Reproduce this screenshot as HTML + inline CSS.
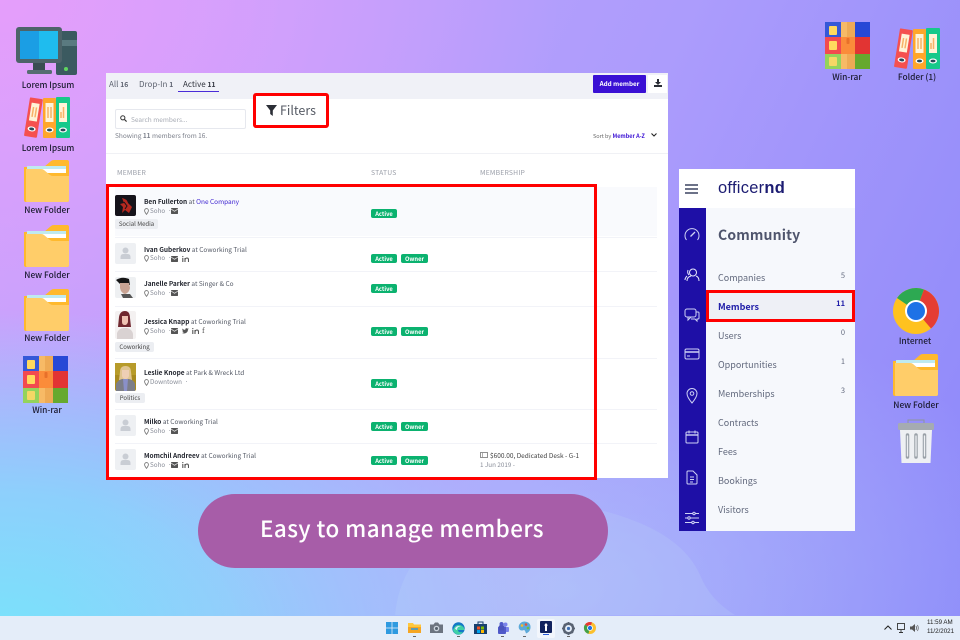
<!DOCTYPE html>
<html><head><meta charset="utf-8"><style>
html,body{margin:0;padding:0}
#s{position:relative;width:960px;height:640px;overflow:hidden;font-family:"Noto Sans CJK JP","Liberation Sans",sans-serif;
background:
radial-gradient(500px 300px at 560px 590px,rgba(176,205,252,.6),rgba(176,205,252,0) 100%),
radial-gradient(520px 330px at 0px 640px,#79e3fb 0%,rgba(121,227,251,.7) 45%,rgba(121,227,251,0) 100%),
radial-gradient(560px 420px at 0px 0px,#e59efb 0%,rgba(229,158,251,0) 100%),
linear-gradient(115deg,#c8a4fd 0%,#ac9cfc 55%,#8c88f9 100%)}
.a{position:absolute}
.t{position:absolute;white-space:nowrap;line-height:12px;height:12px}
.l{position:absolute;white-space:nowrap;font-size:8.4px;font-weight:500;line-height:12px;height:12px;color:#1b1b30;transform:translateX(-50%)}
svg{position:absolute;overflow:visible}
.n{font-size:6.5px;color:#555a66}.n b{color:#23262f;font-weight:700}
.m{font-size:6.3px;color:#8a8e99}
.tag{position:absolute;height:10px;line-height:10px;background:#eceef2;border-radius:2px;font-size:6px;color:#444;text-align:center}
.bd{position:absolute;height:9px;line-height:9px;background:#0bb26f;border-radius:2px;font-size:5.8px;font-weight:700;color:#fff;text-align:center}
.av{position:absolute;width:21px;height:21px;background:#eef0f3;border-radius:2px;left:115px}
.sep{position:absolute;left:115px;width:542px;height:1px;background:#f2f3f8}
.it{position:absolute;left:718px;font-size:9px;line-height:12px;color:#636a7e;white-space:nowrap}
.ct{position:absolute;left:832px;width:13px;text-align:right;font-size:7.5px;line-height:12px;color:#636a7e}
</style></head><body><div id="s">
<svg width="0" height="0" style="position:absolute">
<defs>
<symbol id="fo" viewBox="0 0 45 42"><path d="M0 7h20L27 1q1-1 3-1h13q2 0 2 2v38q0 2-2 2H2q-2 0-2-2z" fill="#ffb92d"/><rect x="3" y="6" width="39" height="7" fill="#fff"/><rect x="3" y="6" width="39" height="3" fill="#bfeaf0"/><path d="M2 9h15q2 0 3 1l6 5q1 1 3 1h16v24q0 2-2 2H3q-1 0-1-2z" fill="#ffcd69"/></symbol>
<symbol id="bi" viewBox="0 0 46 41"><g transform="rotate(9 9 20)"><rect x="3" y="1" width="13" height="39" rx="1" fill="#f5504f"/><rect x="5.500" y="6" width="8" height="18" fill="#fff3d8"/><path d="M8 10v10M11 10v10" stroke="#f7b267" stroke-width="1.500"/><ellipse cx="9.500" cy="32" rx="4" ry="2.500" fill="#fff"/><ellipse cx="9.500" cy="32" rx="2.500" ry="1.400" fill="#294a5a"/></g><rect x="19" y="1" width="13" height="40" rx="1" fill="#ffa62b"/><rect x="21.500" y="6" width="8" height="19" fill="#fff3d8"/><path d="M24 10v11M27 10v11" stroke="#f7b267" stroke-width="1.500"/><ellipse cx="25.500" cy="33" rx="4" ry="2.500" fill="#fff"/><ellipse cx="25.500" cy="33" rx="2.500" ry="1.400" fill="#294a5a"/><rect x="32" y="0" width="14" height="41" rx="1" fill="#16c98a"/><rect x="35" y="6" width="8" height="19" fill="#fff3d8"/><path d="M37 21v-6M39.500 21V10" stroke="#f7b267" stroke-width="1.500"/><ellipse cx="39" cy="33" rx="4" ry="2.500" fill="#fff"/><ellipse cx="39" cy="33" rx="2.500" ry="1.400" fill="#294a5a"/></symbol>
<symbol id="wr" viewBox="0 0 45 47"><rect width="17" height="15" fill="#3458d8"/><rect x="29" width="16" height="15" fill="#2748d6"/><rect y="15" width="17" height="17" fill="#f24a4f"/><rect x="29" y="15" width="16" height="17" fill="#e23433"/><rect y="32" width="17" height="15" fill="#94d35c"/><rect x="29" y="32" width="16" height="15" fill="#66a92e"/><rect x="16" width="14" height="47" fill="#f7ba66"/><rect x="22" width="8" height="47" fill="#eeaa55"/><rect x="16" y="15" width="14" height="17" fill="#fb8c3a"/><rect x="21.500" y="16" width="3" height="6" rx="1" fill="#e8702a"/><rect x="4" y="4" width="8" height="9" rx="1" fill="#ffd95e"/><rect x="4" y="19" width="8" height="9" rx="1" fill="#ffd95e"/><rect x="4" y="35" width="8" height="9" rx="1" fill="#f5d765"/></symbol>
<symbol id="pe" viewBox="0 0 21 21"><circle cx="10.500" cy="7.500" r="3" fill="#c9cdd4"/><path d="M5.500 16v-2q0-3 3-3h4q3 0 3 3v2z" fill="#c9cdd4"/></symbol>
<symbol id="pi" viewBox="0 0 6 8"><path d="M3 .5A2.300 2.300 0 0 0 .7 2.800C.7 4.500 3 7.500 3 7.500S5.300 4.500 5.300 2.800A2.300 2.300 0 0 0 3 .5z" fill="none" stroke="#777" stroke-width="1"/></symbol>
<symbol id="ml" viewBox="0 0 7 6"><rect width="7" height="6" rx=".6" fill="#555"/><path d="M0 1l3.500 2.300L7 1" stroke="#eee" stroke-width=".7" fill="none"/></symbol>
<symbol id="ln" viewBox="0 0 7 6"><path d="M.8 2v4M3 6V2M3 3.500q.6-1.500 2-1.500 1.500 0 1.500 1.800V6" stroke="#555" stroke-width="1.100" fill="none"/><circle cx=".8" cy=".6" r=".6" fill="#555"/></symbol>
</defs></svg>

<!-- background wave -->
<svg style="left:0;top:0" width="960" height="640"><path d="M395 615Q400 560 450 530 520 490 600 510 680 530 700 575 710 600 735 615z" fill="#c2dbfc" opacity=".18"/></svg>

<!-- desktop left -->
<svg style="left:16px;top:27px" width="62" height="48" viewBox="0 0 62 48"><rect x="40" y="4" width="21" height="44" rx="2" fill="#3b5a60"/><rect x="40" y="13" width="21" height="6" fill="#5a7a80"/><circle cx="50" cy="42" r="2" fill="#5fd65f"/><rect x="0" y="0" width="46" height="36" rx="3" fill="#4d6369"/><rect x="4" y="4" width="38" height="28" fill="#1fbcee"/><rect x="4" y="4" width="19" height="28" fill="#1b9ee4"/><rect x="17" y="36" width="12" height="7" fill="#394d52"/><rect x="11" y="43" width="25" height="4" rx="1.500" fill="#566d72"/></svg>
<div class="l" style="left:48px;top:79px">Lorem Ipsum</div>
<svg style="left:24px;top:97px" width="46" height="41"><use href="#bi"/></svg>
<div class="l" style="left:48px;top:142px">Lorem Ipsum</div>
<svg style="left:24px;top:160px" width="45" height="42"><use href="#fo"/></svg>
<div class="l" style="left:47px;top:204px">New Folder</div>
<svg style="left:24px;top:225px" width="45" height="42"><use href="#fo"/></svg>
<div class="l" style="left:47px;top:269px">New Folder</div>
<svg style="left:24px;top:289px" width="45" height="42"><use href="#fo"/></svg>
<div class="l" style="left:47px;top:332px">New Folder</div>
<svg style="left:23px;top:356px" width="45" height="47"><use href="#wr"/></svg>
<div class="l" style="left:47px;top:404px">Win-rar</div>

<!-- desktop right -->
<svg style="left:825px;top:22px" width="45" height="47"><use href="#wr"/></svg>
<div class="l" style="left:847px;top:71px">Win-rar</div>
<svg style="left:894px;top:28px" width="46" height="41"><use href="#bi"/></svg>
<div class="l" style="left:917px;top:71px">Folder (1)</div>
<svg style="left:893px;top:288px" width="46" height="46" viewBox="0 0 46 46"><circle cx="23" cy="23" r="23" fill="#ffc21f"/><path d="M23 23L4 10A23 23 0 0 1 31 1.500z" fill="#2da952"/><path d="M23 23L31 1.500A23 23 0 0 1 38 40.500z" fill="#e53d33"/><circle cx="23" cy="23" r="11" fill="#fff"/><circle cx="23" cy="23" r="9" fill="#1e72e6"/></svg>
<div class="l" style="left:915px;top:335px">Internet</div>
<svg style="left:893px;top:354px" width="45" height="42"><use href="#fo"/></svg>
<div class="l" style="left:916px;top:399px">New Folder</div>
<svg style="left:898px;top:419px" width="36" height="45" viewBox="0 0 36 45"><path d="M10 5V1h16v4" fill="none" stroke="#8d959c" stroke-width="1"/><rect y="4" width="36" height="7" rx="1.500" fill="#a5abb1"/><path d="M2 11h32l-1.500 33H3.500z" fill="#eef0f3"/><path d="M9.500 16v22M18 16v22M26.500 16v22" stroke="#9aa1a8" stroke-width="3.500" stroke-linecap="round"/><path d="M9.500 17v20M18 17v20M26.500 17v20" stroke="#eef0f3" stroke-width="1.300" stroke-linecap="round"/></svg>

<!-- main panel -->
<div class="a" style="left:106px;top:73px;width:562px;height:405px;background:#fff"></div>
<div class="a" style="left:106px;top:73px;width:562px;height:26px;background:#f0f1f7"></div>
<div class="t" style="left:109px;top:78px;font-size:8px;color:#5e6370">All <b style="font-size:6.800px">16</b></div>
<div class="t" style="left:139px;top:78px;font-size:8px;color:#5e6370">Drop-In <b style="font-size:6.800px">1</b></div>
<div class="t" style="left:183px;top:78px;font-size:8px;color:#30333d">Active <b style="font-size:6.800px">11</b></div>
<div class="a" style="left:178px;top:91px;width:41px;height:1px;background:#4a2bd8"></div>
<div class="a" style="left:593px;top:75px;width:53px;height:18px;background:#3a10d4;border-radius:1px"></div>
<div class="t" style="left:593px;top:78px;width:53px;text-align:center;font-size:6.300px;font-weight:700;color:#fff">Add member</div>
<div class="a" style="left:648px;top:75px;width:19px;height:18px;background:#fff"></div>
<svg style="left:654px;top:79px" width="8" height="8" viewBox="0 0 8 8"><path d="M3 0h2v3h2L4 6 1 3h2zM0 6h8v2H0z" fill="#2a2d35"/></svg>

<div class="a" style="left:115px;top:109px;width:129px;height:18px;border:1px solid #e6e8ee;border-radius:2px;background:#fff"></div>
<svg style="left:120px;top:115px" width="7" height="7" viewBox="0 0 7 7"><circle cx="2.800" cy="2.800" r="2.100" fill="none" stroke="#333" stroke-width="1"/><path d="M4.500 4.500L6.600 6.600" stroke="#333" stroke-width="1.200"/></svg>
<div class="t" style="left:131px;top:113px;font-size:6.500px;color:#a8acb5">Search members...</div>
<div class="t" style="left:115px;top:129px;font-size:6.500px;color:#7b7f8a">Showing <b>11</b> members from 16.</div>
<div class="t" style="left:593px;top:130px;font-size:5.500px;color:#666">Sort by <b style="color:#3a10d4">Member A-Z</b></div>
<svg style="left:651px;top:133px" width="6" height="4" viewBox="0 0 6 4"><path d="M.5.500L3 3 5.500.500" fill="none" stroke="#222" stroke-width="1.100"/></svg>
<div class="a" style="left:106px;top:153px;width:562px;height:1px;background:#f0f1f5"></div>
<div class="t" style="left:117px;top:166px;font-size:6.800px;color:#9a9ea8;letter-spacing:.2px">MEMBER</div>
<div class="t" style="left:371px;top:166px;font-size:6.800px;color:#9a9ea8;letter-spacing:.2px">STATUS</div>
<div class="t" style="left:480px;top:166px;font-size:6.800px;color:#9a9ea8;letter-spacing:.2px">MEMBERSHIP</div>

<!-- filters -->
<div class="a" style="left:253px;top:93px;width:70px;height:29px;border:3px solid #f00;border-radius:3px;background:#fff"></div>
<svg style="left:266px;top:105px" width="11" height="11" viewBox="0 0 11 11"><path d="M0 0h11L6.800 5.500V11L4.200 9V5.500z" fill="#2b2e36"/></svg>
<div class="t" style="left:280px;top:102px;height:16px;line-height:16px;font-size:12.500px;color:#555a64">Filters</div>

<!-- rows -->
<div class="a" style="left:115px;top:187px;width:542px;height:49px;background:#f9fafd"></div>
<div class="sep" style="top:237px"></div><div class="sep" style="top:271px"></div><div class="sep" style="top:306px"></div><div class="sep" style="top:358px"></div><div class="sep" style="top:409px"></div><div class="sep" style="top:443px"></div>

<!-- row1 -->
<svg style="left:115px;top:195px" width="21" height="21" viewBox="0 0 21 21"><rect width="21" height="21" rx="2" fill="#15131a"/><path d="M7 3q5 1 6 5l4 4-3 6-4-3-3 3 1-6-3-3 4-1z" fill="#b5281f"/><path d="M9 7l3 4-2 3" stroke="#15131a" fill="none"/></svg>
<div class="t n" style="left:144px;top:195px"><b>Ben Fullerton</b> at <span style="color:#3a1fd0">One Company</span></div>
<svg style="left:144px;top:208px" width="5" height="7"><use href="#pi"/></svg>
<div class="t m" style="left:150px;top:205px">Soho &nbsp;·</div>
<svg style="left:171px;top:208px" width="7" height="6"><use href="#ml"/></svg>
<div class="tag" style="left:115px;top:219px;width:43px">Social Media</div>
<div class="bd" style="left:371px;top:209px;width:26px">Active</div>
<!-- row2 -->
<div class="av" style="top:243px"><svg width="21" height="21"><use href="#pe"/></svg></div>
<div class="t n" style="left:144px;top:243px"><b>Ivan Guberkov</b> at Coworking Trial</div>
<svg style="left:144px;top:255px" width="5" height="7"><use href="#pi"/></svg>
<div class="t m" style="left:150px;top:252px">Soho &nbsp;·</div>
<svg style="left:171px;top:256px" width="7" height="6"><use href="#ml"/></svg>
<svg style="left:182px;top:256px" width="7" height="6"><use href="#ln"/></svg>
<div class="bd" style="left:371px;top:254px;width:26px">Active</div>
<div class="bd" style="left:401px;top:254px;width:27px">Owner</div>
<!-- row3 -->
<svg style="left:115px;top:277px" width="21" height="21" viewBox="0 0 21 21"><rect width="21" height="21" rx="2" fill="#eef0f2"/><path d="M1 3q6-4 13-1l1 6q-3 0-5-1H5z" fill="#161616"/><path d="M5 6h9l1 5q-1 5-5 6-4-1-5-6z" fill="#c9a494"/><path d="M6 17h9l3 4H8z" fill="#555"/></svg>
<div class="t n" style="left:144px;top:277px"><b>Janelle Parker</b> at Singer &amp; Co</div>
<svg style="left:144px;top:290px" width="5" height="7"><use href="#pi"/></svg>
<div class="t m" style="left:150px;top:287px">Soho &nbsp;·</div>
<svg style="left:171px;top:290px" width="7" height="6"><use href="#ml"/></svg>
<div class="bd" style="left:371px;top:284px;width:26px">Active</div>
<!-- row4 -->
<svg style="left:115px;top:311px" width="21" height="28" viewBox="0 0 21 28"><rect width="21" height="28" rx="2" fill="#f4f1f1"/><path d="M4 6q1-6 6-6 5 0 5 7l1 9H3z" fill="#70282f"/><path d="M7 5h6v6q-1 3-3 3-3 0-3-3z" fill="#eec2b2"/><path d="M2 28v-6q2-5 7-5h3q5 1 6 6v5z" fill="#d9d2d2"/></svg>
<div class="t n" style="left:144px;top:315px"><b>Jessica Knapp</b> at Coworking Trial</div>
<svg style="left:144px;top:328px" width="5" height="7"><use href="#pi"/></svg>
<div class="t m" style="left:150px;top:325px">Soho &nbsp;·</div>
<svg style="left:171px;top:328px" width="7" height="6"><use href="#ml"/></svg>
<svg style="left:182px;top:328px" width="7" height="6" viewBox="0 0 7 6"><path d="M0 5q2 1 4 0 2-1 2-3.500L7 .5 6 .7Q5 0 4 .3 3 1 3.200 2 1.500 2 .4.500 0 2 1 3L.3 2.800Q.5 4 1.800 4.300 1 5 0 5z" fill="#555"/></svg>
<svg style="left:192px;top:328px" width="7" height="6"><use href="#ln"/></svg>
<div class="t" style="left:202px;top:325px;font-size:8px;color:#555;font-family:'Liberation Serif',serif">f</div>
<div class="tag" style="left:115px;top:342px;width:39px">Coworking</div>
<div class="bd" style="left:371px;top:327px;width:26px">Active</div>
<div class="bd" style="left:401px;top:327px;width:27px">Owner</div>
<!-- row5 -->
<svg style="left:115px;top:363px" width="21" height="28" viewBox="0 0 21 28"><rect width="21" height="28" rx="2" fill="#a88a1f"/><path d="M0 0h21v12H0z" fill="#b79b2a"/><path d="M5 9q0-6 5.500-6T16 9l1 8H4z" fill="#e0c590"/><path d="M7 7h7v6q-1 3-3.500 3T7 13z" fill="#eecfb5"/><path d="M1 28v-7q2-4 6-5h7q5 1 6 5v7z" fill="#7c7e88"/><path d="M8 16h5l-1 12H9z" fill="#8a90c8"/></svg>
<div class="t n" style="left:144px;top:366px"><b>Leslie Knope</b> at Park &amp; Wreck Ltd</div>
<svg style="left:144px;top:379px" width="5" height="7"><use href="#pi"/></svg>
<div class="t m" style="left:150px;top:376px">Downtown &nbsp;·</div>
<div class="tag" style="left:115px;top:393px;width:30px">Politics</div>
<div class="bd" style="left:371px;top:379px;width:26px">Active</div>
<!-- row6 -->
<div class="av" style="top:415px"><svg width="21" height="21"><use href="#pe"/></svg></div>
<div class="t n" style="left:144px;top:415px"><b>Milko</b> at Coworking Trial</div>
<svg style="left:144px;top:428px" width="5" height="7"><use href="#pi"/></svg>
<div class="t m" style="left:150px;top:425px">Soho &nbsp;·</div>
<svg style="left:171px;top:428px" width="7" height="6"><use href="#ml"/></svg>
<div class="bd" style="left:371px;top:422px;width:26px">Active</div>
<div class="bd" style="left:401px;top:422px;width:27px">Owner</div>
<!-- row7 -->
<div class="av" style="top:449px"><svg width="21" height="21"><use href="#pe"/></svg></div>
<div class="t n" style="left:144px;top:449px"><b>Momchil Andreev</b> at Coworking Trial</div>
<svg style="left:144px;top:462px" width="5" height="7"><use href="#pi"/></svg>
<div class="t m" style="left:150px;top:459px">Soho &nbsp;·</div>
<svg style="left:171px;top:462px" width="7" height="6"><use href="#ml"/></svg>
<svg style="left:182px;top:462px" width="7" height="6"><use href="#ln"/></svg>
<div class="bd" style="left:371px;top:456px;width:26px">Active</div>
<div class="bd" style="left:401px;top:456px;width:27px">Owner</div>
<svg style="left:480px;top:452px" width="8" height="6" viewBox="0 0 8 6"><rect x=".5" y=".5" width="7" height="5" fill="none" stroke="#777" stroke-width=".8"/><path d="M2.500 1v4" stroke="#777" stroke-width=".6"/></svg>
<div class="t n" style="left:490px;top:449px;color:#444">$600.00, Dedicated Desk - G-1</div>
<div class="t m" style="left:480px;top:459px">1 Jun 2019 -</div>

<!-- red box -->
<div class="a" style="left:106px;top:184px;width:485px;height:290px;border:3px solid #f00"></div>

<!-- pill -->
<div class="a" style="left:198px;top:494px;width:410px;height:74px;border-radius:37px;background:#a75da8"></div>
<div class="t" style="left:198px;top:510px;width:410px;height:36px;line-height:36px;text-align:center;padding-right:2px;box-sizing:border-box;font-size:22.400px;letter-spacing:.45px;font-weight:500;color:#fff">Easy to manage members</div>

<!-- sidebar -->
<div class="a" style="left:679px;top:169px;width:176px;height:362px;background:#f6f8fc"></div>
<div class="a" style="left:679px;top:169px;width:176px;height:39px;background:#fff"></div>
<div class="a" style="left:679px;top:208px;width:27px;height:323px;background:#1e0fa6"></div>
<svg style="left:685px;top:184px" width="13" height="10" viewBox="0 0 13 10"><path d="M0 1h13M0 5h13M0 9h13" stroke="#3c4460" stroke-width="1.400"/></svg>
<div class="t" style="left:718px;top:178px;height:20px;line-height:20px;font-size:16.500px;color:#1c1c72;font-family:'Liberation Sans',sans-serif;letter-spacing:.25px">officer<b>nd</b></div>
<div class="t" style="left:718px;top:226px;height:18px;line-height:18px;font-size:14px;font-weight:700;color:#4f556d;letter-spacing:.15px">Community</div>
<div class="it" style="top:272px">Companies</div><div class="ct" style="top:270px">5</div>
<div class="a" style="left:706px;top:291px;width:149px;height:31px;background:#eef0f6"></div>
<div class="it" style="top:301px;color:#1e1ca8;font-weight:700">Members</div><div class="ct" style="top:298px;color:#1e1ca8;font-weight:700">11</div>
<div class="a" style="left:706px;top:290px;width:143px;height:26px;border:3px solid #f00"></div>
<div class="it" style="top:330px">Users</div><div class="ct" style="top:327px">0</div>
<div class="it" style="top:359px">Opportunities</div><div class="ct" style="top:356px">1</div>
<div class="it" style="top:388px">Memberships</div><div class="ct" style="top:385px">3</div>
<div class="it" style="top:417px">Contracts</div>
<div class="it" style="top:446px">Fees</div>
<div class="it" style="top:475px">Bookings</div>
<div class="it" style="top:504px">Visitors</div>

<!-- rail icons -->
<svg style="left:684px;top:227px" width="16" height="16" viewBox="0 0 16 16" fill="none" stroke="#cfd2f5" stroke-width="1"><path d="M2.500 13A7 7 0 1 1 13.500 13"/><path d="M6.500 9.500L11 5" stroke-width="1.300"/></svg>
<svg style="left:684px;top:267px" width="16" height="16" viewBox="0 0 16 16" fill="none" stroke="#e6e8fb" stroke-width="1"><circle cx="9" cy="5.500" r="3.500"/><path d="M3 14q0-4 4-5M15 14q0-4-3-5M3 9q-2 2-2 4M4 3Q3 6 5 8"/></svg>
<svg style="left:684px;top:307px" width="16" height="16" viewBox="0 0 16 16" fill="none" stroke="#cfd2f5" stroke-width="1"><rect x="1" y="2" width="11" height="8" rx="2"/><path d="M4 10v3l3-3M12.500 5H14q1 0 1 1v5q0 1-1 1h-1v2l-2-2H7"/></svg>
<svg style="left:684px;top:348px" width="16" height="13" viewBox="0 0 16 13" fill="none" stroke="#cfd2f5" stroke-width="1"><rect x="1" y="1" width="14" height="10" rx="1.500"/><path d="M1 4h14" stroke-width="1.500"/><path d="M3 8h3"/></svg>
<svg style="left:686px;top:388px" width="12" height="16" viewBox="0 0 12 16" fill="none" stroke="#cfd2f5" stroke-width="1"><path d="M6 15Q1 9 1 5.500a5 5 0 0 1 10 0Q11 9 6 15z"/><circle cx="6" cy="5.500" r="1.800"/></svg>
<svg style="left:685px;top:430px" width="14" height="14" viewBox="0 0 14 14" fill="none" stroke="#cfd2f5" stroke-width="1"><rect x="1" y="2" width="12" height="11" rx="1"/><path d="M1 5h12" stroke-width="1.400"/><path d="M4 .5v3M10 .5v3"/></svg>
<svg style="left:686px;top:470px" width="12" height="15" viewBox="0 0 12 15" fill="none" stroke="#cfd2f5" stroke-width="1"><path d="M2 1h5l4 4v8q0 1-1 1H2q-1 0-1-1V2q0-1 1-1zM4 7h4M4 9.500h4M4 12h3"/></svg>
<svg style="left:684px;top:511px" width="16" height="14" viewBox="0 0 16 14" fill="none" stroke="#cfd2f5" stroke-width="1"><path d="M1 2.500h14M1 7h14M1 11.500h14"/><circle cx="10" cy="2.500" r="1.200" fill="#1e0fa6"/><circle cx="5" cy="7" r="1.200" fill="#1e0fa6"/><circle cx="9" cy="11.500" r="1.200" fill="#1e0fa6"/></svg>

<!-- taskbar -->
<div class="a" style="left:0;top:616px;width:960px;height:24px;background:#e4edf9"></div>
<svg style="left:386px;top:622px" width="12" height="12" viewBox="0 0 12 12" fill="#2f9ae0"><rect width="5.600" height="5.600"/><rect x="6.400" width="5.600" height="5.600"/><rect y="6.400" width="5.600" height="5.600"/><rect x="6.400" y="6.400" width="5.600" height="5.600"/></svg>
<svg style="left:408px;top:622px" width="13" height="12" viewBox="0 0 13 12"><path d="M0 1h5l1 1.500h7V11H0z" fill="#ffc83d"/><path d="M0 5h13v6H0z" fill="#f5a623"/><path d="M3 7h7" stroke="#2f9ae0" stroke-width="1.500"/></svg>
<svg style="left:430px;top:622px" width="13" height="12" viewBox="0 0 13 12"><path d="M0 2.500h3.500L5 .500h3l1.500 2H13V11H0z" fill="#6c7480"/><circle cx="6.500" cy="6.500" r="2.800" fill="#cbd3dc"/><circle cx="6.500" cy="6.500" r="1.500" fill="#55606c"/></svg>
<svg style="left:452px;top:622px" width="13" height="13" viewBox="0 0 13 13"><circle cx="6.500" cy="6.500" r="6.200" fill="#1478c6"/><path d="M1 8Q3 2 8 3q4 1 4.500 5H6q0 3 5 2-2 3-5 2.500Q2 12 1 8z" fill="#3fd0a6"/><path d="M3 6.500Q5 3 9 4.500 5 4 5 8 4 8 3 6.500z" fill="#e4edf9"/></svg>
<svg style="left:474px;top:621px" width="13" height="13" viewBox="0 0 13 13"><path d="M0 3h13v10H0z" fill="#17406e"/><path d="M4 3V1h5v2" stroke="#17406e" fill="none"/><rect x="3" y="5.500" width="3" height="3" fill="#f25022"/><rect x="7" y="5.500" width="3" height="3" fill="#7fba00"/><rect x="3" y="9" width="3" height="3" fill="#00a4ef"/><rect x="7" y="9" width="3" height="3" fill="#ffb900"/></svg>
<svg style="left:496px;top:622px" width="13" height="12" viewBox="0 0 13 12"><circle cx="9.500" cy="2.500" r="2" fill="#7b83eb"/><rect x="8" y="5" width="5" height="5" rx="1" fill="#7b83eb"/><circle cx="5.500" cy="2" r="2" fill="#5059c9"/><rect x="2" y="4.500" width="8" height="7.500" rx="1" fill="#5059c9"/><path d="M3 3.500h5v5H3z" fill="#4b53bc"/></svg>
<svg style="left:518px;top:621px" width="13" height="13" viewBox="0 0 13 13"><path d="M6.500.500Q13 1 12.500 7 12 11 8 12.500 7 9 6 9 4 10 2 9 0 7 1 4 3 .500 6.500.500z" fill="#5ba9d9"/><circle cx="4" cy="4.500" r="1.300" fill="#f5bb2e"/><circle cx="8" cy="3.500" r="1.300" fill="#e0533d"/><circle cx="10" cy="7" r="1.300" fill="#6cbd45"/></svg>
<div class="a" style="left:537px;top:619px;width:18px;height:19px;background:#f2f6fc;border-radius:2px"></div>
<svg style="left:540px;top:621px" width="12" height="14" viewBox="0 0 12 14"><rect width="12" height="12" rx="1" fill="#12235e"/><path d="M6 2l2 2.500H7V10H5V4.500H4z" fill="#fff"/><path d="M3 13.500h6" stroke="#2a5bd7" stroke-width="1"/></svg>
<svg style="left:562px;top:622px" width="13" height="13" viewBox="0 0 13 13"><circle cx="6.500" cy="6.500" r="4.700" fill="none" stroke="#596373" stroke-width="2.500"/><circle cx="6.500" cy="6.500" r="1.600" fill="#3d6fb4"/><path d="M6.500 0v2M6.500 11v2M0 6.500h2M11 6.500h2M2 2l1.200 1.200M9.800 9.800L11 11M11 2L9.800 3.200M3.200 9.800L2 11" stroke="#596373" stroke-width="1.500"/></svg>
<svg style="left:584px;top:622px" width="12" height="12" viewBox="0 0 12 12"><circle cx="6" cy="6" r="6" fill="#fbc02d"/><path d="M6 6L1 2.500A6 6 0 0 1 8 .400z" fill="#e53935"/><path d="M6 6L1 2.500A6 6 0 0 0 4.500 11.800z" fill="#43a047"/><circle cx="6" cy="6" r="2.900" fill="#fff"/><circle cx="6" cy="6" r="2.100" fill="#1e72e6"/></svg>
<div class="a" style="left:413px;top:636px;width:3px;height:1px;background:#666"></div>
<div class="a" style="left:457px;top:636px;width:3px;height:1px;background:#666"></div>
<div class="a" style="left:501px;top:636px;width:3px;height:1px;background:#666"></div>
<div class="a" style="left:523px;top:636px;width:3px;height:1px;background:#666"></div>
<div class="a" style="left:567px;top:636px;width:3px;height:1px;background:#666"></div>
<svg style="left:884px;top:625px" width="8" height="5" viewBox="0 0 8 5"><path d="M.5 4.500L4 1l3.500 3.500" fill="none" stroke="#222" stroke-width="1"/></svg>
<svg style="left:897px;top:623px" width="9" height="10" viewBox="0 0 9 10" fill="none" stroke="#333" stroke-width=".9"><rect x=".5" y=".5" width="7" height="6"/><path d="M4 7v2M2 9.500h4"/></svg>
<svg style="left:910px;top:624px" width="9" height="8" viewBox="0 0 9 8"><path d="M0 2.500h2L5 0v8L2 5.500H0z" fill="#555"/><path d="M6 2q1 2 0 4M7.500 1q1.500 3 0 6" stroke="#555" stroke-width=".7" fill="none"/></svg>
<div class="t" style="left:927px;top:617px;font-size:6.200px;color:#222;font-family:'Liberation Sans',sans-serif">11:59 AM</div>
<div class="t" style="left:927px;top:626px;font-size:6.200px;color:#222;font-family:'Liberation Sans',sans-serif">11/2/2021</div>
</div></body></html>
